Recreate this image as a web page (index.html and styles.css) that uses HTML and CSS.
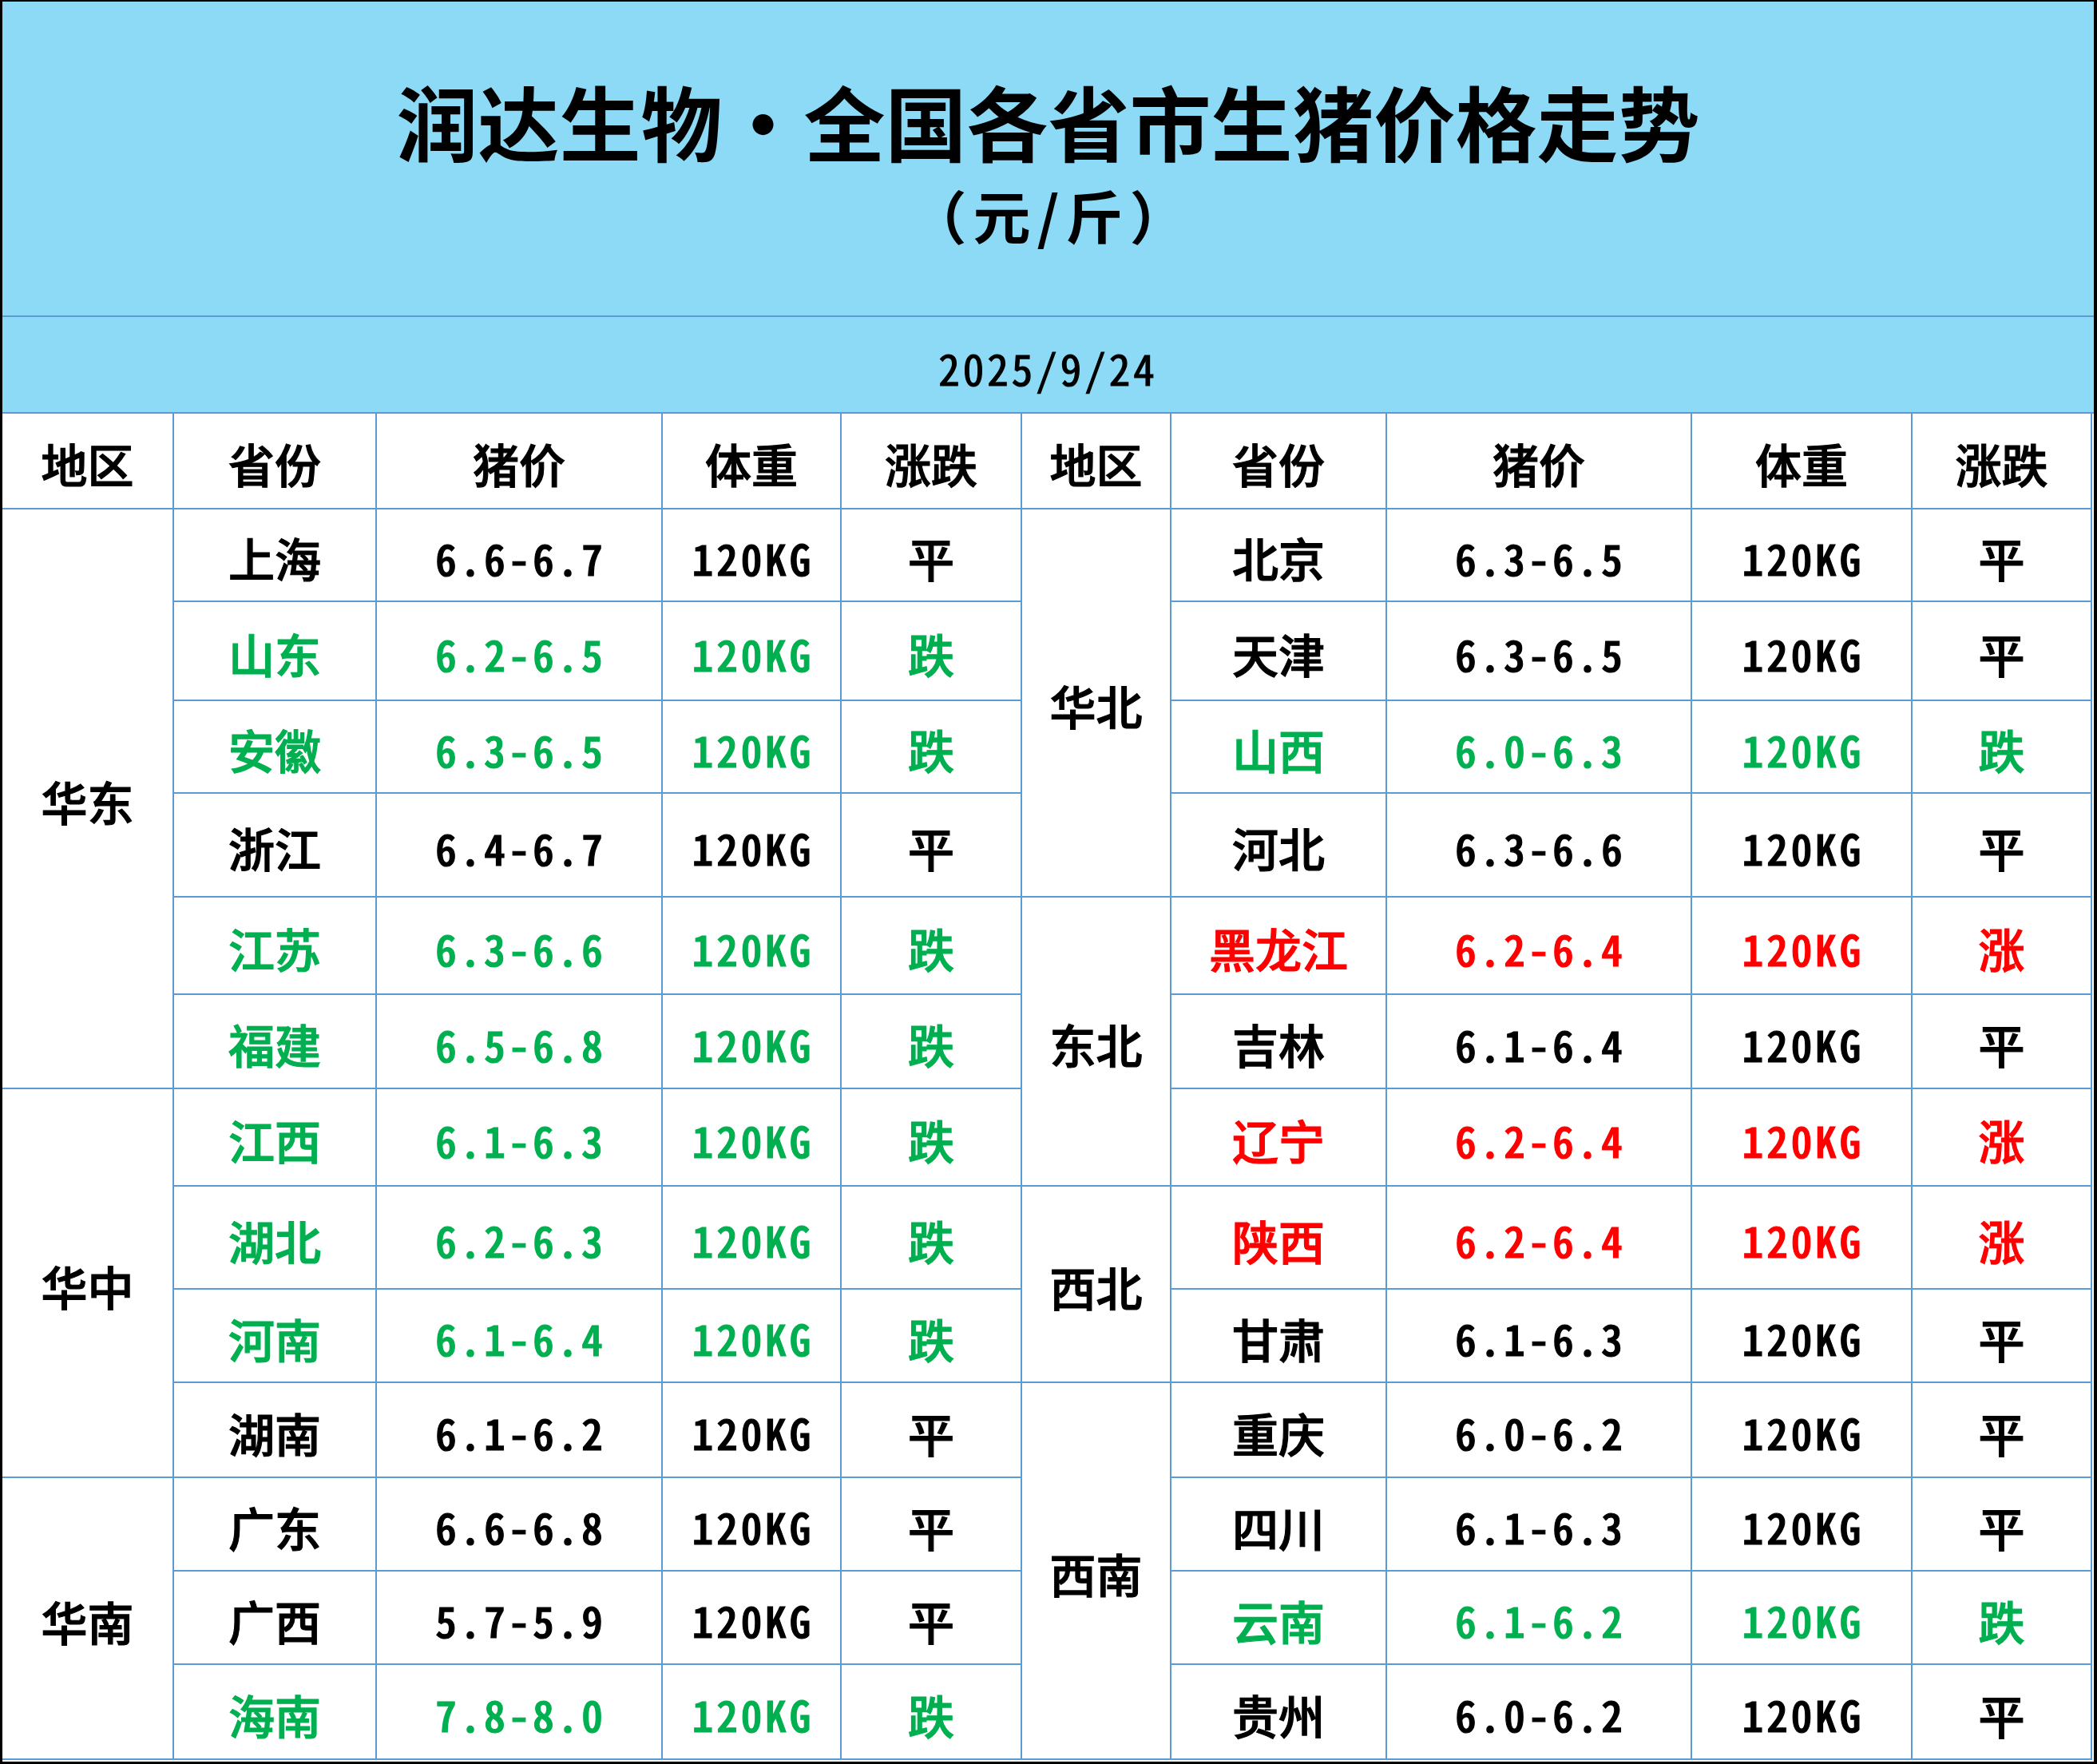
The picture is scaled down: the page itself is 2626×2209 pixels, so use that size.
FILE: index.html
```html
<!DOCTYPE html>
<html lang="zh-CN">
<head>
<meta charset="utf-8">
<title>润达生物·全国各省市生猪价格走势</title>
<link rel="stylesheet" href="styles.css">
</head>
<body>
<div class="page">
  <header class="band">
    <h1 class="title">润达生物·全国各省市生猪价格走势</h1>
    <div class="subtitle">（元/斤）</div>
  </header>
  <div class="date">2025/9/24</div>
  <div class="grid">
    <div class="cell">地区</div><div class="cell">省份</div><div class="cell">猪价</div><div class="cell">体重</div><div class="cell">涨跌</div>
    <div class="cell">地区</div><div class="cell">省份</div><div class="cell">猪价</div><div class="cell">体重</div><div class="cell">涨跌</div>

    <div class="cell s6">华东</div>
    <div class="cell">上海</div><div class="cell num">6.6-6.7</div><div class="cell num">120KG</div><div class="cell">平</div>
    <div class="cell s4">华北</div>
    <div class="cell">北京</div><div class="cell num">6.3-6.5</div><div class="cell num">120KG</div><div class="cell">平</div>

    <div class="cell g">山东</div><div class="cell num g">6.2-6.5</div><div class="cell num g">120KG</div><div class="cell g">跌</div>
    <div class="cell">天津</div><div class="cell num">6.3-6.5</div><div class="cell num">120KG</div><div class="cell">平</div>

    <div class="cell g">安徽</div><div class="cell num g">6.3-6.5</div><div class="cell num g">120KG</div><div class="cell g">跌</div>
    <div class="cell g">山西</div><div class="cell num g">6.0-6.3</div><div class="cell num g">120KG</div><div class="cell g">跌</div>

    <div class="cell">浙江</div><div class="cell num">6.4-6.7</div><div class="cell num">120KG</div><div class="cell">平</div>
    <div class="cell">河北</div><div class="cell num">6.3-6.6</div><div class="cell num">120KG</div><div class="cell">平</div>

    <div class="cell g">江苏</div><div class="cell num g">6.3-6.6</div><div class="cell num g">120KG</div><div class="cell g">跌</div>
    <div class="cell s3">东北</div>
    <div class="cell r">黑龙江</div><div class="cell num r">6.2-6.4</div><div class="cell num r">120KG</div><div class="cell r">涨</div>

    <div class="cell g">福建</div><div class="cell num g">6.5-6.8</div><div class="cell num g">120KG</div><div class="cell g">跌</div>
    <div class="cell">吉林</div><div class="cell num">6.1-6.4</div><div class="cell num">120KG</div><div class="cell">平</div>

    <div class="cell s4">华中</div>
    <div class="cell g">江西</div><div class="cell num g">6.1-6.3</div><div class="cell num g">120KG</div><div class="cell g">跌</div>
    <div class="cell r">辽宁</div><div class="cell num r">6.2-6.4</div><div class="cell num r">120KG</div><div class="cell r">涨</div>

    <div class="cell g">湖北</div><div class="cell num g">6.2-6.3</div><div class="cell num g">120KG</div><div class="cell g">跌</div>
    <div class="cell s2">西北</div>
    <div class="cell r">陕西</div><div class="cell num r">6.2-6.4</div><div class="cell num r">120KG</div><div class="cell r">涨</div>

    <div class="cell g">河南</div><div class="cell num g">6.1-6.4</div><div class="cell num g">120KG</div><div class="cell g">跌</div>
    <div class="cell">甘肃</div><div class="cell num">6.1-6.3</div><div class="cell num">120KG</div><div class="cell">平</div>

    <div class="cell">湖南</div><div class="cell num">6.1-6.2</div><div class="cell num">120KG</div><div class="cell">平</div>
    <div class="cell s4">西南</div>
    <div class="cell">重庆</div><div class="cell num">6.0-6.2</div><div class="cell num">120KG</div><div class="cell">平</div>

    <div class="cell s3">华南</div>
    <div class="cell">广东</div><div class="cell num">6.6-6.8</div><div class="cell num">120KG</div><div class="cell">平</div>
    <div class="cell">四川</div><div class="cell num">6.1-6.3</div><div class="cell num">120KG</div><div class="cell">平</div>

    <div class="cell">广西</div><div class="cell num">5.7-5.9</div><div class="cell num">120KG</div><div class="cell">平</div>
    <div class="cell g">云南</div><div class="cell num g">6.1-6.2</div><div class="cell num g">120KG</div><div class="cell g">跌</div>

    <div class="cell g">海南</div><div class="cell num g">7.8-8.0</div><div class="cell num g">120KG</div><div class="cell g">跌</div>
    <div class="cell">贵州</div><div class="cell num">6.0-6.2</div><div class="cell num">120KG</div><div class="cell">平</div>
  </div>
</div>
</body>
</html>
```

FILE: styles.css
```css
html, body {
  margin: 0;
  padding: 0;
  background: #ffffff;
}

.page {
  width: 2626px;
  height: 2209px;
  box-sizing: border-box;
  border-style: solid;
  border-color: #000000;
  border-width: 2px 4px 3px 3px;
  background: #ffffff;
  display: flex;
  flex-direction: column;
  overflow: hidden;
  color: #000000;
}

.band {
  height: 395px;
  flex: none;
  box-sizing: border-box;
  background: #8ddaf6;
  border-bottom: 2px solid #5b9bd5;
  display: flex;
  flex-direction: column;
  align-items: center;
  padding-top: 98px;
}

.title {
  margin: 0;
  font: 700 102px/1 "Noto Sans CJK SC", sans-serif;
  white-space: nowrap;
}

.subtitle {
  margin-top: 30px;
  margin-right: -8px;
  font: 700 72px/1 "Noto Sans CJK SC", sans-serif;
  letter-spacing: 8px;
  white-space: nowrap;
}

.date {
  height: 121px;
  flex: none;
  box-sizing: border-box;
  background: #8ddaf6;
  border-bottom: 2px solid #5b9bd5;
  display: flex;
  align-items: center;
  justify-content: center;
  padding-top: 8px;
  font: 400 53px/1 "Noto Sans CJK SC", sans-serif;
  font-feature-settings: "hwid" 1;
  letter-spacing: 4px;
  -webkit-text-stroke: 1.2px currentColor;
}

.grid {
  display: grid;
  width: 2617px;
  grid-template-columns: 215px 254px 358px 224px 226px 187px 270px 382px 276px 225px;
  grid-template-rows: 120px 116px 124px 116px 130px 122px 118px 122px 129px 117px 119px 117px 117px 119px;
}

.cell {
  box-sizing: border-box;
  border-right: 2px solid #5b9bd5;
  border-bottom: 2px solid #5b9bd5;
  display: flex;
  align-items: center;
  justify-content: center;
  padding-top: 6px;
  font: 500 58px/1 "Noto Sans CJK SC", sans-serif;
  -webkit-text-stroke: 1.2px currentColor;
  white-space: nowrap;
}

.num {
  font: 500 53px/1 "Noto Sans CJK SC", sans-serif;
  font-feature-settings: "hwid" 1;
  letter-spacing: 4px;
  padding-left: 4px;
}

.g { color: #00b050; }
.r { color: #ff0000; }

.s2 { grid-row: span 2; }
.s3 { grid-row: span 3; }
.s4 { grid-row: span 4; }
.s6 { grid-row: span 6; }
```
